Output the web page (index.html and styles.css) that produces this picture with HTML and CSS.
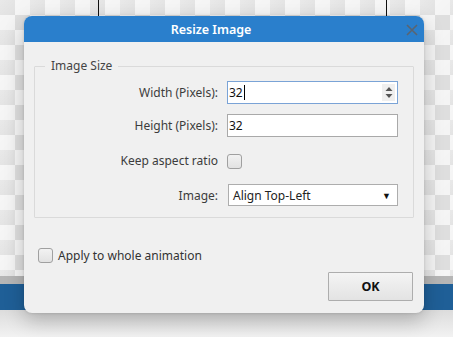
FILE: index.html
```html
<!DOCTYPE html>
<html lang="en">
<head>
    <meta charset="UTF-8">
    <title>Resize Image</title>
    <link rel="stylesheet" href="styles.css">
</head>
<body>
    <div class="app">
        <div class="canvas-area">
            <span class="guide guide-left"></span>
            <span class="guide guide-right"></span>
        </div>
        <div class="timeline-edge"></div>
        <div class="timeline-bar"></div>
        <div class="app-rest"></div>

        <div class="dialog">
            <div class="dialog-title">
                <span class="title-text">Resize Image</span>
                <svg class="close-icon" width="12" height="12" viewBox="0 0 12 12">
                    <path d="M1 1 L11 11 M11 1 L1 11" stroke="#5a6470" stroke-width="1.6" fill="none"/>
                </svg>
            </div>
            <div class="dialog-body">
                <fieldset class="group">
                    <legend>Image Size</legend>
                    <div class="form-grid">
                        <label class="field-label">Width (Pixels):</label>
                        <div class="text-box focused">
                            <span class="value">32</span><span class="caret"></span>
                            <span class="spinner">
                                <svg width="8" height="13" viewBox="0 0 8 13">
                                    <path d="M0.5 5 L4 1 L7.5 5 Z M0.5 8 L4 12 L7.5 8 Z" fill="#555"/>
                                </svg>
                            </span>
                        </div>

                        <label class="field-label">Height (Pixels):</label>
                        <div class="text-box"><span class="value">32</span></div>

                        <label class="field-label">Keep aspect ratio</label>
                        <div class="check-cell"><span class="checkbox"></span></div>

                        <label class="field-label">Image:</label>
                        <div class="combo">
                            <span class="value">Align Top-Left</span>
                            <span class="combo-arrow">▼</span>
                        </div>
                    </div>
                </fieldset>

                <div class="apply-row">
                    <span class="checkbox"></span>
                    <span>Apply to whole animation</span>
                </div>

                <div class="button-row">
                    <button class="ok-button">OK</button>
                </div>
            </div>
        </div>
    </div>
</body>
</html>
```

FILE: styles.css
```css
* {
    box-sizing: border-box;
    margin: 0;
    padding: 0;
}

body {
    font-family: 'Noto Sans', 'Open Sans', sans-serif;
    font-size: 12px;
    color: #333;
    background: #e8e8e8;
    width: 453px;
    height: 337px;
    overflow: hidden;
}

.app {
    position: relative;
    width: 453px;
    height: 337px;
    display: flex;
    flex-direction: column;
}

.canvas-area {
    position: relative;
    height: 276px;
    flex-shrink: 0;
    background-color: #f1f1f1;
    background-image:
        linear-gradient(135deg, rgba(255, 255, 255, 0.35) 0%, rgba(255, 255, 255, 0) 60%),
        conic-gradient(#f4f4f4 0 25%, #dedede 0 50%, #f4f4f4 0 75%, #dedede 0);
    background-size: 30px 30px, 30px 30px;
}

.guide {
    position: absolute;
    top: 0;
    width: 1px;
    height: 16px;
    background: #111;
}

.guide-left {
    left: 98px;
}

.guide-right {
    left: 386px;
}

.timeline-edge {
    height: 8px;
    flex-shrink: 0;
    background: #b6b6b6;
}

.timeline-bar {
    height: 26px;
    flex-shrink: 0;
    background: #1f5f97;
}

.app-rest {
    flex: 1;
    background: linear-gradient(#dcdcdc, #f2f2f2);
}

.dialog {
    position: absolute;
    left: 24px;
    top: 16px;
    width: 400px;
    height: 297px;
    background: #f0f0f0;
    border-radius: 8px;
    overflow: hidden;
    box-shadow: 0 8px 20px rgba(0, 0, 0, 0.22), 0 0 3px rgba(0, 0, 0, 0.15);
    display: flex;
    flex-direction: column;
}

.dialog-title {
    height: 26px;
    flex-shrink: 0;
    background: #2a7fcc;
    display: flex;
    align-items: center;
    justify-content: center;
    position: relative;
    padding-right: 26px;
}

.title-text {
    color: #fff;
    font-size: 12.5px;
    font-weight: 600;
}

.close-icon {
    position: absolute;
    right: 6px;
    top: 8px;
}

.dialog-body {
    flex: 1;
    padding: 17px 10px 0 10px;
    display: flex;
    flex-direction: column;
}

.group {
    border: 1px solid #dadada;
    border-radius: 1px;
    height: 159px;
    flex-shrink: 0;
    padding: 8px 15px 0 0;
}

.group legend {
    margin-left: 10px;
    padding: 0 6px;
    color: #444;
    line-height: 14px;
}

.form-grid {
    display: grid;
    grid-template-columns: 1fr 171px;
    column-gap: 9px;
    row-gap: 10px;
    align-items: center;
}

.field-label {
    text-align: right;
    color: #3c3c3c;
}

.text-box {
    position: relative;
    height: 23px;
    background: #fff;
    border: 1px solid #a9a9a9;
    display: flex;
    align-items: center;
    padding-left: 1px;
    color: #111;
}

.text-box.focused {
    border-color: #7aa3d6;
}

.caret {
    width: 1px;
    height: 15px;
    background: #000;
    margin-left: 1px;
}

.spinner {
    position: absolute;
    right: 2px;
    top: 2px;
    width: 13px;
    height: 17px;
    background: #efefef;
    display: flex;
    align-items: center;
    justify-content: center;
}

.check-cell {
    height: 27px;
    display: flex;
    align-items: center;
    padding-top: 2px;
}

.checkbox {
    display: inline-block;
    flex-shrink: 0;
    width: 15px;
    height: 15px;
    border: 1px solid #a0a0a0;
    border-radius: 3px;
    background: linear-gradient(#f2f2f2, #e2e2e2);
}

.combo {
    height: 22px;
    margin-left: 1px;
    background: #fff;
    border: 1px solid #adadad;
    display: flex;
    align-items: center;
    justify-content: space-between;
    padding: 0 6px 0 4px;
    color: #222;
}

.combo-arrow {
    font-size: 9px;
    color: #111;
}

.apply-row {
    margin-top: 29px;
    margin-left: 4px;
    height: 17px;
    display: flex;
    align-items: center;
    gap: 5px;
    color: #333;
}

.button-row {
    margin-top: 8px;
    display: flex;
    justify-content: flex-end;
    padding-right: 1px;
}

.ok-button {
    width: 85px;
    height: 29px;
    border: 1px solid #adadad;
    border-radius: 1px;
    background: linear-gradient(#f4f4f4, #e3e3e3);
    font-family: 'Noto Sans', sans-serif;
    font-size: 12.5px;
    font-weight: bold;
    color: #111;
}
```
